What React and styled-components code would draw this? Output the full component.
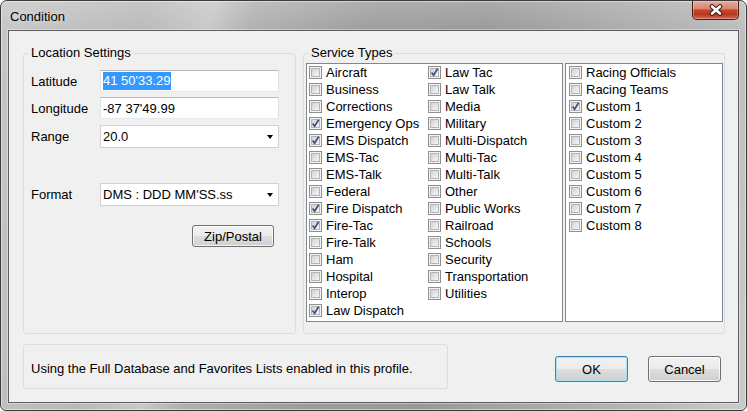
import React from 'react';
import styled, { createGlobalStyle } from 'styled-components';

const Global = createGlobalStyle`
  html, body { margin: 0; padding: 0; background: #ffffff; }
  body { font-family: "Liberation Sans", Arial, sans-serif; font-size: 13px; color: #000; }
  * { box-sizing: border-box; }
`;

const Window = styled.div`
  width: 747px;
  height: 411px;
  border: 1px solid #3b3b3b;
  border-radius: 7px 7px 6px 6px;
  padding: 0 7px 7px 7px;
  display: flex;
  flex-direction: column;
  overflow: hidden;
  background:
    linear-gradient(180deg, rgba(255,255,255,0.18) 0%, rgba(255,255,255,0) 8%),
    linear-gradient(100deg, #c6c6c6 0%, #b9b9b9 18%, #c8c8c8 26%, #b0b0b0 31%, #9d9d9d 45%, #999999 60%, #a6a6a6 72%, #b5b5b5 86%, #cbcbcb 100%);
  box-shadow: inset 0 0 0 1px rgba(255,255,255,0.45);
`;

const TitleBar = styled.div`
  height: 29px;
  display: flex;
  align-items: flex-start;
  flex-shrink: 0;
`;

const TitleText = styled.div`
  margin: 8px 0 0 2px;
  font-size: 13px;
  line-height: 15px;
  color: #000;
  text-shadow: 0 0 6px rgba(255,255,255,0.7);
`;

const CloseButton = styled.div`
  margin-left: auto;
  width: 47px;
  height: 19px;
  border: 1px solid #4c1d14;
  border-top: none;
  border-radius: 0 0 5px 5px;
  background: linear-gradient(180deg, #e7aa9c 0%, #dc8572 42%, #c5462e 50%, #b7371f 74%, #d36a50 100%);
  box-shadow: inset 0 0 0 1px rgba(255,255,255,0.3);
  display: flex;
  align-items: center;
  justify-content: center;
`;

const Client = styled.div`
  flex: 1;
  background: #f0f0f0;
  border: 1px solid #5e5e5e;
  box-shadow: 0 0 0 1px rgba(255,255,255,0.35);
  padding: 14px 13px 0 14px;
  display: flex;
  flex-direction: column;
`;

const TopRow = styled.div`
  display: flex;
  gap: 7px;
`;

const Group = styled.fieldset`
  margin: 0;
  padding: 0;
  width: ${p => p.$width}px;
  height: 289px;
  border: 1px solid #d5dfe5;
  border-radius: 3px;
  min-width: 0;
`;

const Legend = styled.legend`
  margin-left: 5px;
  padding: 0 2px;
  font-size: 13px;
  line-height: 16px;
  color: #000;
`;

const FormBody = styled.div`
  padding: 9px 0 0 7px;
  display: flex;
  flex-direction: column;
`;

const FieldRow = styled.div`
  display: flex;
  align-items: center;
  margin-top: ${p => p.$top || 0}px;
`;

const Label = styled.div`
  width: 69px;
  font-size: 13px;
`;

const TextBox = styled.div`
  width: 179px;
  height: 22px;
  background: #fff;
  border: 1px solid;
  border-color: #b7bac0 #dfe3e8 #e3e9ef #dfe3e8;
  padding-left: 2px;
  display: flex;
  align-items: center;
  font-size: 13px;
  white-space: nowrap;
`;

const Selected = styled.span`
  background: #3399ff;
  color: #fff;
  line-height: 18px;
`;

const Combo = styled.div`
  width: 179px;
  height: 23px;
  background: #fff;
  border: 1px solid #d2d2d2;
  padding: 0 5px 0 2px;
  display: flex;
  align-items: center;
  justify-content: space-between;
  font-size: 13px;
  white-space: nowrap;
`;

const Arrow = styled.span`
  width: 0;
  height: 0;
  border-left: 3.5px solid transparent;
  border-right: 3.5px solid transparent;
  border-top: 4px solid #000;
  margin-top: 1px;
`;

const Button = styled.button`
  width: ${p => p.$width}px;
  height: ${p => p.$height}px;
  padding: 0;
  font-family: "Liberation Sans", Arial, sans-serif;
  font-size: 13px;
  color: #000;
  border: 1px solid ${p => (p.$default ? '#3c7fb1' : '#707070')};
  border-radius: 3px;
  background: linear-gradient(180deg, #f2f2f2 0%, #ebebeb 48%, #dddddd 52%, #cfcfcf 100%);
  box-shadow: inset 0 0 0 1px ${p => (p.$default ? '#a6e3f6' : 'rgba(255,255,255,0.75)')};
  cursor: default;
`;

const ZipRow = styled.div`
  display: flex;
  justify-content: flex-end;
  width: 248px;
  margin-top: 19px;
  padding-right: 5px;
`;

const ListsBody = styled.div`
  display: flex;
  gap: 2px;
  padding: 2px 0 0 2px;
`;

const ListBox = styled.div`
  width: ${p => p.$width}px;
  height: 259px;
  background: #fff;
  border: 1px solid #828790;
  padding: 0 0 0 ${p => p.$pad}px;
  display: grid;
  grid-template-rows: repeat(15, 17px);
  grid-auto-flow: column;
  grid-auto-columns: 119px;
  align-content: start;
`;

const Item = styled.div`
  display: flex;
  align-items: center;
  gap: 4px;
  height: 17px;
  font-size: 13px;
  white-space: nowrap;
`;

const Box = styled.span`
  position: relative;
  width: 13px;
  height: 13px;
  flex-shrink: 0;
  border: 1px solid #8e8f8f;
  background: #f4f4f4;
  &::before {
    content: '';
    position: absolute;
    left: 1px; top: 1px; right: 1px; bottom: 1px;
    border: 1px solid #b4b4b4;
    background: linear-gradient(135deg, #d2d2d2 0%, #e6e6e6 55%, #f6f6f6 100%);
  }
  svg { position: absolute; left: 0; top: 0; }
`;

const BottomRow = styled.div`
  display: flex;
  align-items: flex-start;
  margin-top: 10px;
`;

const StatusBox = styled.div`
  width: 425px;
  height: 45px;
  border: 1px solid #d5dfe5;
  border-radius: 3px;
  padding: 4px 0 0 7px;
  display: flex;
  align-items: center;
  font-size: 13px;
`;

const Buttons = styled.div`
  margin-left: auto;
  margin-right: 4px;
  margin-top: 12px;
  display: flex;
  gap: 20px;
`;

const CloseX = () => (
  <svg width="14" height="12" viewBox="0 0 14 12">
    <path d="M3 2.5 L11 9.5 M11 2.5 L3 9.5" stroke="#3b1a14" strokeWidth="4.6" strokeLinecap="round" />
    <path d="M3 2.5 L11 9.5 M11 2.5 L3 9.5" stroke="#ffffff" strokeWidth="2.6" strokeLinecap="round" />
  </svg>
);

const Check = ({ checked }) => (
  <Box>
    {checked && (
      <svg width="11" height="11" viewBox="0 0 11 11">
        <path d="M2.6 5.6 L4.6 8.2 L8.6 1.8" fill="none" stroke="#3d4f82" strokeWidth="1.7" />
      </svg>
    )}
  </Box>
);

const list1 = [
  ['Aircraft', false], ['Business', false], ['Corrections', false], ['Emergency Ops', true],
  ['EMS Dispatch', true], ['EMS-Tac', false], ['EMS-Talk', false], ['Federal', false],
  ['Fire Dispatch', true], ['Fire-Tac', true], ['Fire-Talk', false], ['Ham', false],
  ['Hospital', false], ['Interop', false], ['Law Dispatch', true],
  ['Law Tac', true], ['Law Talk', false], ['Media', false], ['Military', false],
  ['Multi-Dispatch', false], ['Multi-Tac', false], ['Multi-Talk', false], ['Other', false],
  ['Public Works', false], ['Railroad', false], ['Schools', false], ['Security', false],
  ['Transportation', false], ['Utilities', false],
];

const list2 = [
  ['Racing Officials', false], ['Racing Teams', false], ['Custom 1', true], ['Custom 2', false],
  ['Custom 3', false], ['Custom 4', false], ['Custom 5', false], ['Custom 6', false],
  ['Custom 7', false], ['Custom 8', false],
];

export default function App() {
  return (
    <>
      <Global />
      <Window>
        <TitleBar>
          <TitleText>Condition</TitleText>
          <CloseButton><CloseX /></CloseButton>
        </TitleBar>
        <Client>
          <TopRow>
            <Group $width={273}>
              <Legend>Location Settings</Legend>
              <FormBody>
                <FieldRow>
                  <Label>Latitude</Label>
                  <TextBox><Selected>41 50'33.29</Selected></TextBox>
                </FieldRow>
                <FieldRow $top={5}>
                  <Label>Longitude</Label>
                  <TextBox>-87 37'49.99</TextBox>
                </FieldRow>
                <FieldRow $top={6}>
                  <Label>Range</Label>
                  <Combo>20.0<Arrow /></Combo>
                </FieldRow>
                <FieldRow $top={35}>
                  <Label>Format</Label>
                  <Combo>DMS : DDD MM'SS.ss<Arrow /></Combo>
                </FieldRow>
                <ZipRow>
                  <Button $width={82} $height={22}>Zip/Postal</Button>
                </ZipRow>
              </FormBody>
            </Group>
            <Group $width={422}>
              <Legend>Service Types</Legend>
              <ListsBody>
                <ListBox $width={257} $pad={2}>
                  {list1.map(([name, c]) => (
                    <Item key={name}><Check checked={c} />{name}</Item>
                  ))}
                </ListBox>
                <ListBox $width={158} $pad={3}>
                  {list2.map(([name, c]) => (
                    <Item key={name}><Check checked={c} />{name}</Item>
                  ))}
                </ListBox>
              </ListsBody>
            </Group>
          </TopRow>
          <BottomRow>
            <StatusBox>Using the Full Database and Favorites Lists enabled in this profile.</StatusBox>
            <Buttons>
              <Button $default $width={73} $height={26}>OK</Button>
              <Button $width={73} $height={26}>Cancel</Button>
            </Buttons>
          </BottomRow>
        </Client>
      </Window>
    </>
  );
}
